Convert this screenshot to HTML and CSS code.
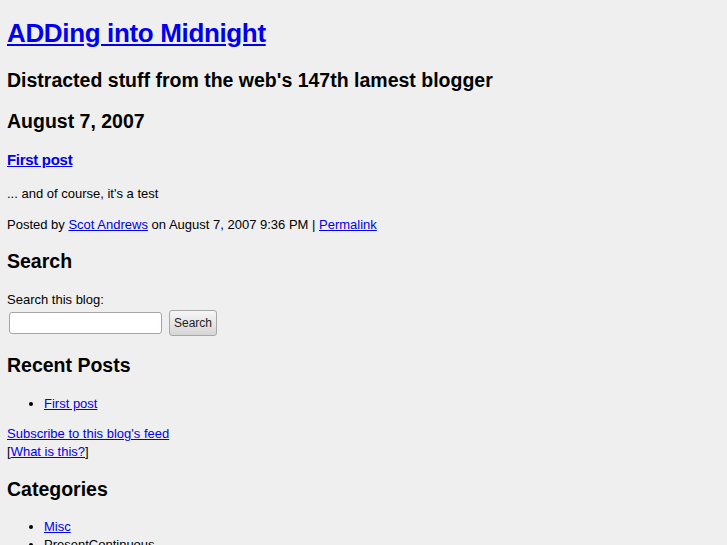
FILE: index.html
```html
<!DOCTYPE html>
<html lang="en">
<head>
    <meta charset="UTF-8">
    <title>ADDing into Midnight</title>
    <link rel="stylesheet" href="styles.css">
</head>
<body>
    <div class="banner">
        <h1 class="banner-header"><a href="#">ADDing into Midnight</a></h1>
        <h2 class="banner-description">Distracted stuff from the web's 147th lamest blogger</h2>
    </div>

    <div class="content">
        <h2 class="date-header">August 7, 2007</h2>
        <div class="entry">
            <h3 class="entry-header"><a href="#">First post</a></h3>
            <div class="entry-body">
                <p>... and of course, it's a test</p>
            </div>
            <p class="entry-footer">Posted by <a href="#">Scot Andrews</a> on August 7, 2007 9:36 PM | <a href="#">Permalink</a></p>
        </div>
    </div>

    <div class="sidebar">
        <h2 class="module-header">Search</h2>
        <form class="search-form">
            <label for="search">Search this blog:</label>
            <div class="search-row">
                <input type="text" id="search" class="search-input">
                <button type="submit" class="search-button">Search</button>
            </div>
        </form>

        <h2 class="module-header">Recent Posts</h2>
        <ul class="module-list">
            <li><a href="#">First post</a></li>
        </ul>

        <div class="module-feed">
            <a href="#">Subscribe to this blog's feed</a><br>
            [<a href="#">What is this?</a>]
        </div>

        <h2 class="module-header">Categories</h2>
        <ul class="module-list">
            <li><a href="#">Misc</a></li>
            <li>PresentContinuous</li>
        </ul>
    </div>
</body>
</html>
```

FILE: styles.css
```css
body {
    font-family: 'Liberation Sans', Arial, sans-serif;
    font-size: 13px;
    line-height: 1.36;
    margin: 0 7px 8px;
    background-color: #efefef;
    color: #000;
}
a {
    color: #0000ee;
}
h1 {
    font-size: 26px;
    line-height: 1.3;
    letter-spacing: -0.35px;
    margin: 17px 0;
}
h2 {
    font-size: 19.5px;
    line-height: 1.3;
    margin: 16px 0;
}
h3 {
    font-size: 15px;
    line-height: 1.3;
    letter-spacing: -0.3px;
    margin: 15px 0;
}
p {
    margin: 13px 0;
}
.search-form {
    margin: 0;
}
.search-form label {
    display: block;
}
.search-row {
    display: flex;
    align-items: center;
    gap: 7px;
    margin-top: 2px;
    padding: 0 0 1px 2px;
}
.search-input {
    box-sizing: border-box;
    width: 153px;
    height: 22px;
    margin: 0;
    padding: 2px 4px;
    border: 1px solid #a5a5a5;
    border-radius: 3px;
    background: #fff;
    font: 13px 'Liberation Sans', Arial, sans-serif;
}
.search-button {
    box-sizing: border-box;
    width: 48px;
    height: 26px;
    margin: 0;
    padding: 0;
    border: 1px solid #a8a8a8;
    border-radius: 3px;
    background: linear-gradient(#f6f6f6, #d6d6d6);
    font: 12px 'Liberation Sans', Arial, sans-serif;
    color: #222;
}
.module-list {
    margin: 13px 0;
    padding-left: 37px;
}
.module-feed {
    margin: 13px 0;
}
```
